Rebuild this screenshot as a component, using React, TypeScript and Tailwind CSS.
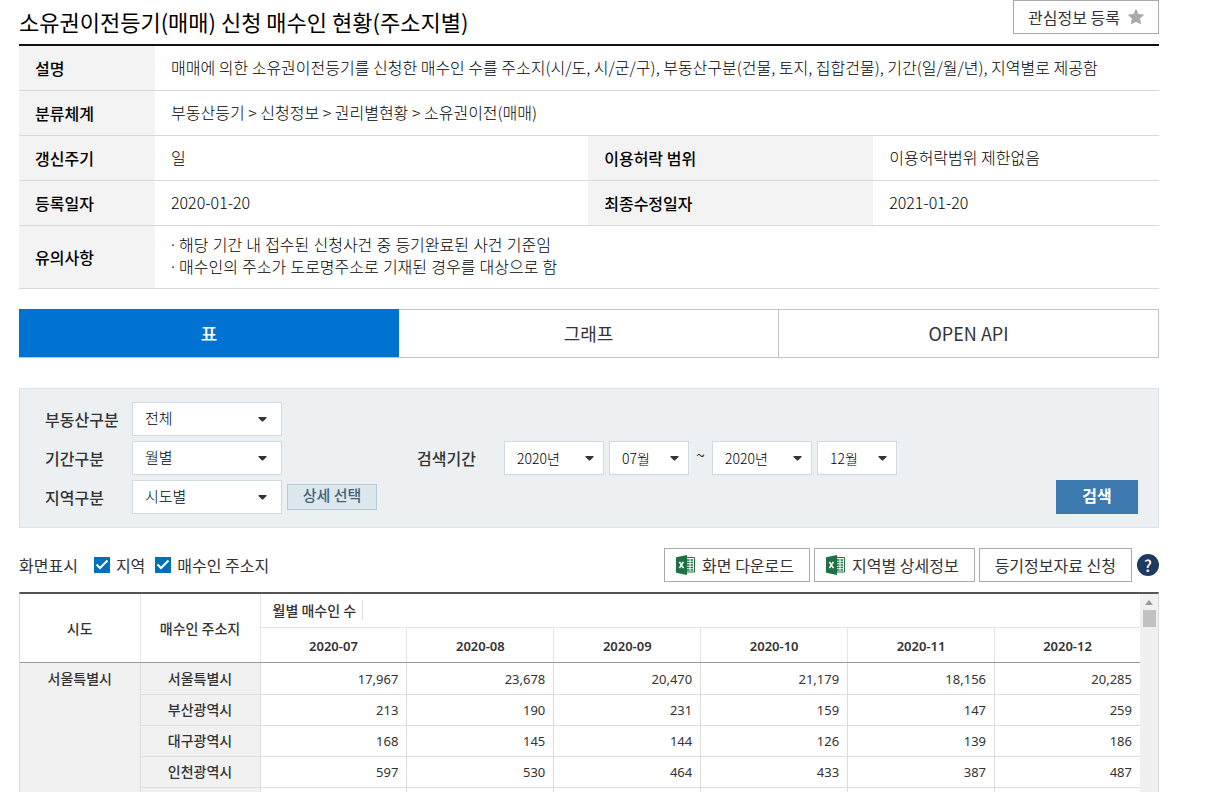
import { useState } from 'react';

const infoTh = 'bg-[#f3f3f3] px-4 text-left font-medium';
const infoTd = 'px-4 pb-0.5 font-light';
const gridTh = 'border-r border-b border-r-[#e5e5e5] border-b-[#999] font-medium';

const regions = [
  { name: '서울특별시', values: ['17,967', '23,678', '20,470', '21,179', '18,156', '20,285'] },
  { name: '부산광역시', values: ['213', '190', '231', '159', '147', '259'] },
  { name: '대구광역시', values: ['168', '145', '144', '126', '139', '186'] },
  { name: '인천광역시', values: ['597', '530', '464', '433', '387', '487'] },
  { name: '', values: ['', '', '', '', '', ''] },
];

const months = ['2020-07', '2020-08', '2020-09', '2020-10', '2020-11', '2020-12'];

function ExcelIcon() {
  return (
    <svg width="19" height="20" viewBox="0 0 19 20" aria-hidden="true">
      <path d="M10 2.5h8.5v14.5H10z" fill="#fff" stroke="#1e7145" />
      <path d="M11 5h2.5M14.5 5H17M11 7.5h2.5M14.5 7.5H17M11 10h2.5M14.5 10H17M11 12.5h2.5M14.5 12.5H17M11 15h2.5M14.5 15H17" stroke="#1e7145" strokeWidth="1.3" />
      <path d="M0 2.2 11 0v20L0 17.8z" fill="#1e7145" />
      <path d="m3.4 6.8 4 6.4M7.4 6.8l-4 6.4" stroke="#fff" strokeWidth="1.6" />
    </svg>
  );
}

function StarIcon() {
  return (
    <svg width="16" height="16" viewBox="0 0 16 16" aria-hidden="true">
      <path d="M8 0.8 10.2 5.4 15.4 6.1 11.6 9.6 12.6 14.8 8 12.3 3.4 14.8 4.4 9.6 0.6 6.1 5.8 5.4z" fill="#aaa" stroke="#aaa" strokeLinejoin="round" />
    </svg>
  );
}

function Select({ id, label, value, small }: { id: string; label?: string; value: string; small?: boolean }) {
  return (
    <div className="relative">
      <select
        id={id}
        aria-label={label}
        className={`h-[34px] w-full appearance-none border border-[#ccdae2] bg-white pl-3 font-light text-black ${small ? 'text-sm' : 'text-[15px]'}`}
      >
        <option>{value}</option>
      </select>
      <svg className={`pointer-events-none absolute top-[15px] ${small ? 'right-[10px]' : 'right-[15px]'}`} width="9" height="5" viewBox="0 0 9 5">
        <path d="M0.5 0h8v1L5 4.5H4L0.5 1z" fill="#333" />
      </svg>
    </div>
  );
}

function Check({ checked, onChange }: { checked: boolean; onChange: (v: boolean) => void }) {
  return (
    <span className="relative size-4">
      <input
        type="checkbox"
        checked={checked}
        onChange={(e) => onChange(e.target.checked)}
        className="block size-4 appearance-none border border-[#0070ba] checked:bg-[#0070ba]"
      />
      {checked && (
        <svg className="pointer-events-none absolute inset-0" width="16" height="16" viewBox="0 0 16 16">
          <path d="m2.5 7.5 3.5 3.5 7.5-7.5" fill="none" stroke="#fff" strokeWidth="2" />
        </svg>
      )}
    </span>
  );
}

export default function App() {
  const [tab, setTab] = useState(0);
  const [showRegion, setShowRegion] = useState(true);
  const [showAddress, setShowAddress] = useState(true);

  return (
    <div className="h-screen overflow-hidden bg-white pr-[58px] pl-[19px] font-['Noto_Sans_CJK_KR',sans-serif] text-black">
      <div className="flex h-11 items-start justify-between">
        <h1 className="pt-1 text-[22px] leading-[34px]">소유권이전등기(매매) 신청 매수인 현황(주소지별)</h1>
        <button className="flex h-[34px] items-center gap-2 border border-[#aaa] px-[14px] text-base text-[#333]">
          관심정보 등록
          <StarIcon />
        </button>
      </div>

      <table className="w-full table-fixed border-t-2 border-[#111] text-base [&_tr]:border-b [&_tr]:border-[#d9d9d9]">
        <colgroup>
          <col className="w-[136px]" />
          <col className="w-[38%]" />
          <col className="w-[25%]" />
          <col />
        </colgroup>
        <tbody>
          <tr className="h-[45px]">
            <th className={infoTh}>설명</th>
            <td className={infoTd} colSpan={3}>매매에 의한 소유권이전등기를 신청한 매수인 수를 주소지(시/도, 시/군/구), 부동산구분(건물, 토지, 집합건물), 기간(일/월/년), 지역별로 제공함</td>
          </tr>
          <tr className="h-[45px]">
            <th className={infoTh}>분류체계</th>
            <td className={infoTd} colSpan={3}>부동산등기 &gt; 신청정보 &gt; 권리별현황 &gt; 소유권이전(매매)</td>
          </tr>
          <tr className="h-[45px]">
            <th className={infoTh}>갱신주기</th>
            <td className={infoTd}>일</td>
            <th className={infoTh}>이용허락 범위</th>
            <td className={infoTd}>이용허락범위 제한없음</td>
          </tr>
          <tr className="h-[45px]">
            <th className={infoTh}>등록일자</th>
            <td className={infoTd}>2020-01-20</td>
            <th className={infoTh}>최종수정일자</th>
            <td className={infoTd}>2021-01-20</td>
          </tr>
          <tr className="h-[63px]">
            <th className={infoTh}>유의사항</th>
            <td className={`${infoTd} font-['Noto_Sans','Noto_Sans_CJK_KR',sans-serif] leading-[22px]`} colSpan={3}>
              · 해당 기간 내 접수된 신청사건 중 등기완료된 사건 기준임<br />
              · 매수인의 주소가 도로명주소로 기재된 경우를 대상으로 함
            </td>
          </tr>
        </tbody>
      </table>

      <div className="mt-5 flex h-[49px] border-b border-[#c3c3c3] text-lg text-[#333]">
        {['표', '그래프', 'OPEN API'].map((name, i) => (
          <button
            key={name}
            onClick={() => setTab(i)}
            className={`w-1/3 ${tab === i ? 'bg-[#0073d2] font-medium text-white' : 'border-t border-r border-[#c3c3c3]'}`}
          >
            {name}
          </button>
        ))}
      </div>

      <form className="mt-[30px] flex h-[140px] justify-between border border-[#d7e3e9] bg-[#ecf0f3] py-[13px] pr-5 pl-[25px] text-[#333]" onSubmit={(e) => e.preventDefault()}>
        <div className="grid w-[372px] grid-cols-[87px_150px_90px] items-center gap-y-[5px]">
          <label htmlFor="kind" className="font-medium">부동산구분</label>
          <Select id="kind" value="전체" />
          <span />
          <label htmlFor="period" className="font-medium">기간구분</label>
          <Select id="period" value="월별" />
          <span />
          <label htmlFor="area" className="font-medium">지역구분</label>
          <Select id="area" value="시도별" />
          <button type="button" className="ml-[5px] h-[26px] w-[90px] border border-[#b4ccd9] bg-[#dde8ee] pb-1 text-[15px] leading-none font-medium text-[#41617d]">상세 선택</button>
        </div>
        <div className="flex flex-1 items-center">
          <label htmlFor="fromYear" className="w-[87px] font-medium">검색기간</label>
          <div className="grid grid-cols-[100px_80px] gap-[5px]">
            <Select small id="fromYear" value="2020년" />
            <Select small id="fromMonth" label="시작 월" value="07월" />
          </div>
          <span className="w-[23px] pb-2 text-center">~</span>
          <div className="grid grid-cols-[100px_80px] gap-[5px]">
            <Select small id="toYear" label="종료 년" value="2020년" />
            <Select small id="toMonth" label="종료 월" value="12월" />
          </div>
        </div>
        <button className="h-[34px] w-[82px] self-end bg-[#3c7ab0] pb-[3px] font-bold text-white">검색</button>
      </form>

      <div className="mt-5 flex h-[34px] items-center justify-between text-[#333]">
        <div className="flex items-center">
          <span className="mr-4">화면표시</span>
          <label className="mr-[10px] flex items-center gap-[6px]">
            <Check checked={showRegion} onChange={setShowRegion} />
            지역
          </label>
          <label className="flex items-center gap-[6px]">
            <Check checked={showAddress} onChange={setShowAddress} />
            매수인 주소지
          </label>
        </div>
        <div className="flex items-center gap-1">
          <button className="flex h-[34px] items-center gap-[7px] border border-[#aaa] pr-[15px] pl-[11px]">
            <ExcelIcon />
            화면 다운로드
          </button>
          <button className="flex h-[34px] items-center gap-[7px] border border-[#aaa] pr-[15px] pl-[11px]">
            <ExcelIcon />
            지역별 상세정보
          </button>
          <button className="mr-px h-[34px] border border-[#aaa] px-[15px]">등기정보자료 신청</button>
          <button className="flex size-[22px] items-center justify-center rounded-full bg-[#1f3a5f] text-base font-medium text-white">?</button>
        </div>
      </div>

      <div className="mt-[10px] flex border-x border-t-2 border-x-[#d9d9d9] border-t-[#555]">
        <table className="flex-1 table-fixed text-sm text-[#333]">
          <colgroup>
            <col className="w-[120px]" />
            <col className="w-[120px]" />
          </colgroup>
          <thead>
            <tr className="h-[34px]">
              <th rowSpan={2} className={gridTh}>시도</th>
              <th rowSpan={2} className={gridTh}>매수인 주소지</th>
              <th colSpan={6} className="border-b border-[#e5e5e5] pl-3 text-left font-medium">
                <span className="border-r border-[#ddd] pr-[6px]">월별 매수인 수</span>
              </th>
            </tr>
            <tr className="h-[35px]">
              {months.map((m) => (
                <th key={m} className="border-r border-b border-r-[#e5e5e5] border-b-[#999] pt-0.5 font-['Noto_Sans',sans-serif] text-[13px] font-semibold last:border-r-0">{m}</th>
              ))}
            </tr>
          </thead>
          <tbody>
            {regions.map((r, i) => (
              <tr key={i} className="h-[31px] first:h-8">
                {i === 0 && (
                  <th rowSpan={5} className="border-r border-[#ddd] bg-[#f1f1f1] pt-[5px] align-top font-medium">서울특별시</th>
                )}
                <th className="border-r border-b border-[#ddd] bg-[#f1f1f1] pb-0.5 font-medium">{r.name}</th>
                {r.values.map((v, j) => (
                  <td key={j} className="border-r border-b border-[#ddd] pt-px pr-2 text-right font-['Noto_Sans',sans-serif] text-[13px] last:border-r-0">{v}</td>
                ))}
              </tr>
            ))}
          </tbody>
        </table>
        <div className="flex w-[18px] flex-col items-center bg-[#f0f0f0]">
          <svg className="mt-[6px] mb-[5px]" width="8" height="5" viewBox="0 0 8 5">
            <path d="M0 5h8L4 0z" fill="#999" />
          </svg>
          <div className="h-[17px] w-[13px] bg-[#c1c1c1]" />
        </div>
      </div>
    </div>
  );
}
